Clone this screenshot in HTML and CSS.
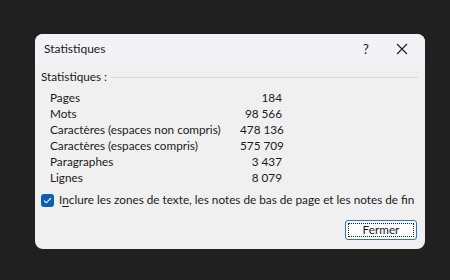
FILE: index.html
```html
<!DOCTYPE html>
<html>
<head>
<meta charset="utf-8">
<link rel="stylesheet" href="styles.css">
</head>
<body>
<div class="dialog">
  <div class="titlebar">
    <span class="title">Statistiques</span>
    <span class="help">?</span>
    <span class="close"><svg width="12" height="12" viewBox="0 0 12 12"><path d="M1 1L11 11M11 1L1 11" stroke="#1a1a1a" stroke-width="1.1" fill="none"/></svg></span>
  </div>
  <div class="body">
    <div class="group"><span class="glabel">Statistiques :</span><span class="gline"></span></div>
    <div class="stats">
      <span>Pages</span><span class="num">184</span>
      <span>Mots</span><span class="num">98&#8239;566</span>
      <span>Caractères (espaces non compris)</span><span class="num">478&#8239;136</span>
      <span>Caractères (espaces compris)</span><span class="num">575&#8239;709</span>
      <span>Paragraphes</span><span class="num">3&#8239;437</span>
      <span>Lignes</span><span class="num">8&#8239;079</span>
    </div>
    <label class="check">
      <span class="box"><svg width="9" height="7" viewBox="0 0 9 7"><path d="M1 3.6L3.3 5.8L8 1" stroke="#fff" stroke-width="1.1" fill="none"/></svg></span>
      <span class="ctext">I<u>n</u>clure les zones de texte, les notes de bas de page et les notes de fin</span>
    </label>
    <div class="actions"><button class="btn"><span class="focus">Fermer</span></button></div>
  </div>
</div>
</body>
</html>
```
FILE: styles.css
```css
html, body { margin: 0; padding: 0; }
body {
  width: 450px; height: 280px;
  background: #202020;
  font-family: Lato, "Liberation Sans", sans-serif;
  font-size: 11.75px;
  line-height: 16px;
  color: #1a1a1a;
  overflow: hidden;
  white-space: nowrap;
}
.dialog {
  margin: 34px 0 0 35px;
  width: 390px; height: 215px;
  border-radius: 8px;
  background: #f0f0f0;
  overflow: hidden;
  display: flex; flex-direction: column;
}
.titlebar {
  height: 30px;
  background: #f3f2f7;
  display: flex; align-items: center;
  padding-left: 9px;
  font-size: 12px;
}
.title { flex: 1; }
.help { width: 16px; text-align: center; margin-right: 22px; font-size: 13px; }
.close { width: 12px; height: 12px; margin-right: 17px; display: flex; }
.body { padding: 5px 7px 0 6px; display: flex; flex-direction: column; flex: 1; }
.group { display: flex; align-items: center; height: 16px; }
.glabel { margin-right: 4px; }
.gline { flex: 1; height: 1px; background: #d8d8d8; }
.stats {
  display: grid;
  grid-template-columns: 190px 42px;
  margin: 5px 0 0 9px;
}
.num { text-align: right; }
.check { display: flex; align-items: center; margin-top: 6px; height: 16px; }
.box {
  width: 13px; height: 13px; border-radius: 3px;
  background: #0a5fb4;
  display: flex; align-items: center; justify-content: center;
  margin-right: 5px;
  flex: none;
}
.check u { text-decoration-thickness: 1px; text-underline-offset: 2px; }
.actions { display: flex; justify-content: flex-end; margin-top: 12px; padding-right: 1px; }
.btn {
  width: 72px; height: 20px;
  border: 1px solid #2a73c5;
  border-radius: 3px;
  background: #fdfdfd;
  padding: 2px;
  font: inherit; color: #1a1a1a;
  display: flex;
}
.focus {
  flex: 1;
  border: 1px dotted #222;
  display: flex; align-items: center; justify-content: center;
  line-height: 12px;
}
```
